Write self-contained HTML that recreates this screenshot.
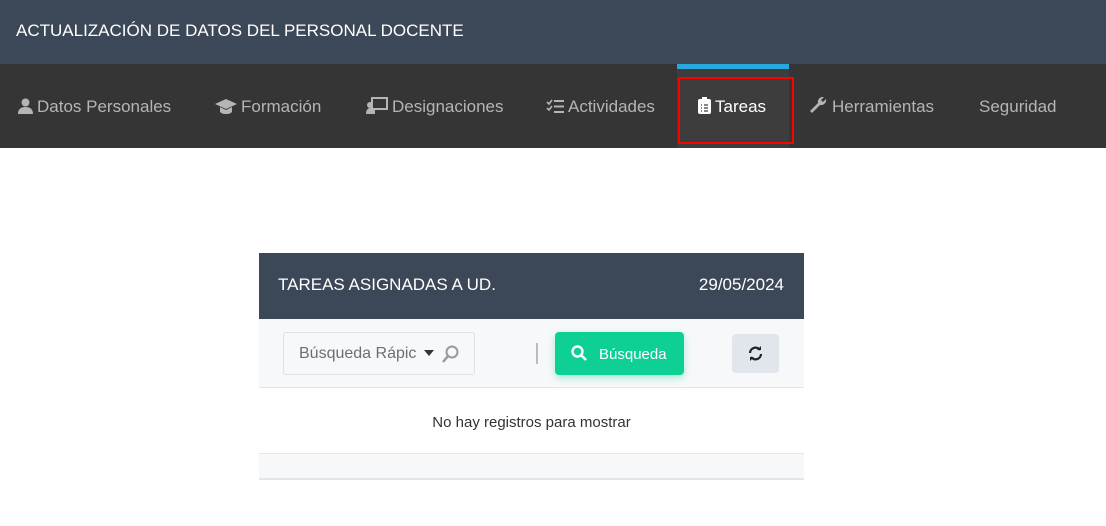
<!DOCTYPE html>
<html><head><meta charset="utf-8"><style>
*{margin:0;padding:0;box-sizing:border-box}
body{width:1106px;height:526px;background:#fff;font-family:"Liberation Sans",Arial,sans-serif;position:relative;overflow:hidden}
.top{position:absolute;left:0;top:0;width:1106px;height:64px;background:#3c4757;color:#fff;font-size:17px;padding:21px 0 0 16px}
.nav{position:absolute;left:0;top:64px;width:1106px;height:84px;background:#353535}
.it{position:absolute;top:33px;color:#b5b5b5;font-size:17px;white-space:nowrap}
.it svg{vertical-align:-2px;margin-right:4px}
.act{position:absolute;left:677px;top:0;width:112px;height:84px;background:#3d3d3d;border-top:5px solid #29a8e0}
.red{position:absolute;left:678px;top:13px;width:116px;height:67px;border:2px solid #f00}
.card{position:absolute;left:259px;top:253px;width:545px}
.ch{height:66px;background:#3c4757;color:#fff;font-size:17px;padding:22px 20px 0 19px;display:flex;justify-content:space-between}
.tb{height:69px;background:#f7f8fa;border-bottom:1px solid #e3e6ea;position:relative}
.inp{position:absolute;left:24px;top:13px;width:192px;height:43px;border:1px solid #dde2e8;border-radius:3px;background:#f7f8fa;color:#6b6f75;font-size:16px;padding:12px 0 0 15px}
.sep{position:absolute;left:277px;top:24px;width:2px;height:21px;background:#bbb}
.btn{position:absolute;left:296px;top:13px;width:129px;height:43px;background:#0ed095;border-radius:4px;color:#fff;font-size:15px;padding:13px 0 0 16px;box-shadow:0 3px 8px rgba(14,208,149,.35)}
.ref{position:absolute;left:473px;top:15px;width:47px;height:39px;background:#e1e6ec;border-radius:4px}
.row{height:66px;background:#fff;text-align:center;font-size:15px;color:#333;padding-top:26px;border-bottom:1px solid #e3e6ea}
.ft{height:26px;background:#f7f8fa;border-bottom:2px solid #e3e6ea}
</style></head><body>
<div class="top">ACTUALIZACIÓN DE DATOS DEL PERSONAL DOCENTE</div>
<div class="nav">
<div class="act"></div><div class="red"></div>
<div class="it" style="left:18px"><svg width="15" height="16" viewBox="0 0 15 16"><circle cx="7.5" cy="4.5" r="4" fill="#b5b5b5"/><path d="M0 16c0-5 3-7 7.5-7S15 11 15 16z" fill="#b5b5b5"/></svg>Datos Personales</div>
<div class="it" style="left:215px"><svg width="22" height="15" viewBox="0 0 22 15"><path d="M11 0L22 5 11 10 0 5z" fill="#b5b5b5"/><path d="M5 8v5c3 3 9 3 12 0V8l-6 3z" fill="#b5b5b5"/></svg>Formación</div>
<div class="it" style="left:366px"><svg width="22" height="17" viewBox="0 0 22 17"><rect x="6" y="1" width="15" height="11" fill="none" stroke="#b5b5b5" stroke-width="2"/><circle cx="4" cy="8" r="3" fill="#b5b5b5"/><path d="M0 17c0-4 2-6 4-6h5v6z" fill="#b5b5b5"/></svg>Designaciones</div>
<div class="it" style="left:546px"><svg width="18" height="15" viewBox="0 0 18 15"><path d="M1 3l2 2 3-4M1 9l2 2 3-4" stroke="#b5b5b5" stroke-width="1.6" fill="none"/><path d="M8 2h10M8 7.5h10M8 13h10" stroke="#b5b5b5" stroke-width="2"/></svg>Actividades</div>
<div class="it" style="left:698px;color:#fff"><svg width="13" height="17" viewBox="0 0 13 17"><rect x="0" y="2" width="13" height="15" rx="2" fill="#fff"/><rect x="4" y="0" width="5" height="4" fill="#fff"/><path d="M3 8h1M6 8h4M3 11h1M6 11h4M3 14h1M6 14h4" stroke="#3d3d3d" stroke-width="1.2"/></svg>Tareas</div>
<div class="it" style="left:810px"><svg width="18" height="17" viewBox="0 0 18 17"><path d="M2 16l8-8a5 5 0 0 0 6-6l-3 3-2-2 3-3a5 5 0 0 0-6 6L0 14z" fill="#b5b5b5"/></svg>Herramientas</div>
<div class="it" style="left:979px">Seguridad</div>
</div>
<div class="card">
<div class="ch"><span>TAREAS ASIGNADAS A UD.</span><span>29/05/2024</span></div>
<div class="tb">
<div class="inp">Búsqueda Rápic <span style="position:absolute;left:140px;top:17px;border:5px solid transparent;border-top:6px solid #333;border-bottom:0"></span><svg style="position:absolute;left:158px;top:12px" width="18" height="18" viewBox="0 0 18 18"><circle cx="10" cy="7" r="5.5" fill="none" stroke="#999" stroke-width="2"/><path d="M6 11l-5 6" stroke="#999" stroke-width="2.5"/></svg></div>
<div class="sep"></div>
<div class="btn"><svg style="vertical-align:-2px;margin-right:12px" width="16" height="16" viewBox="0 0 16 16"><circle cx="6.5" cy="6.5" r="5" fill="none" stroke="#fff" stroke-width="2.4"/><path d="M10 10l5 5" stroke="#fff" stroke-width="2.6"/></svg>Búsqueda</div>
<div class="ref"><svg style="position:absolute;left:16px;top:12px" width="15" height="15" viewBox="0 0 15 15"><path d="M2 7a5.5 5.5 0 0 1 10-3M13 8a5.5 5.5 0 0 1-10 3" stroke="#222" stroke-width="2.2" fill="none"/><path d="M9 4h4V0zM6 11H2v4z" fill="#222"/></svg></div>
</div>
<div class="row">No hay registros para mostrar</div>
<div class="ft"></div>
</div>
</body></html>
